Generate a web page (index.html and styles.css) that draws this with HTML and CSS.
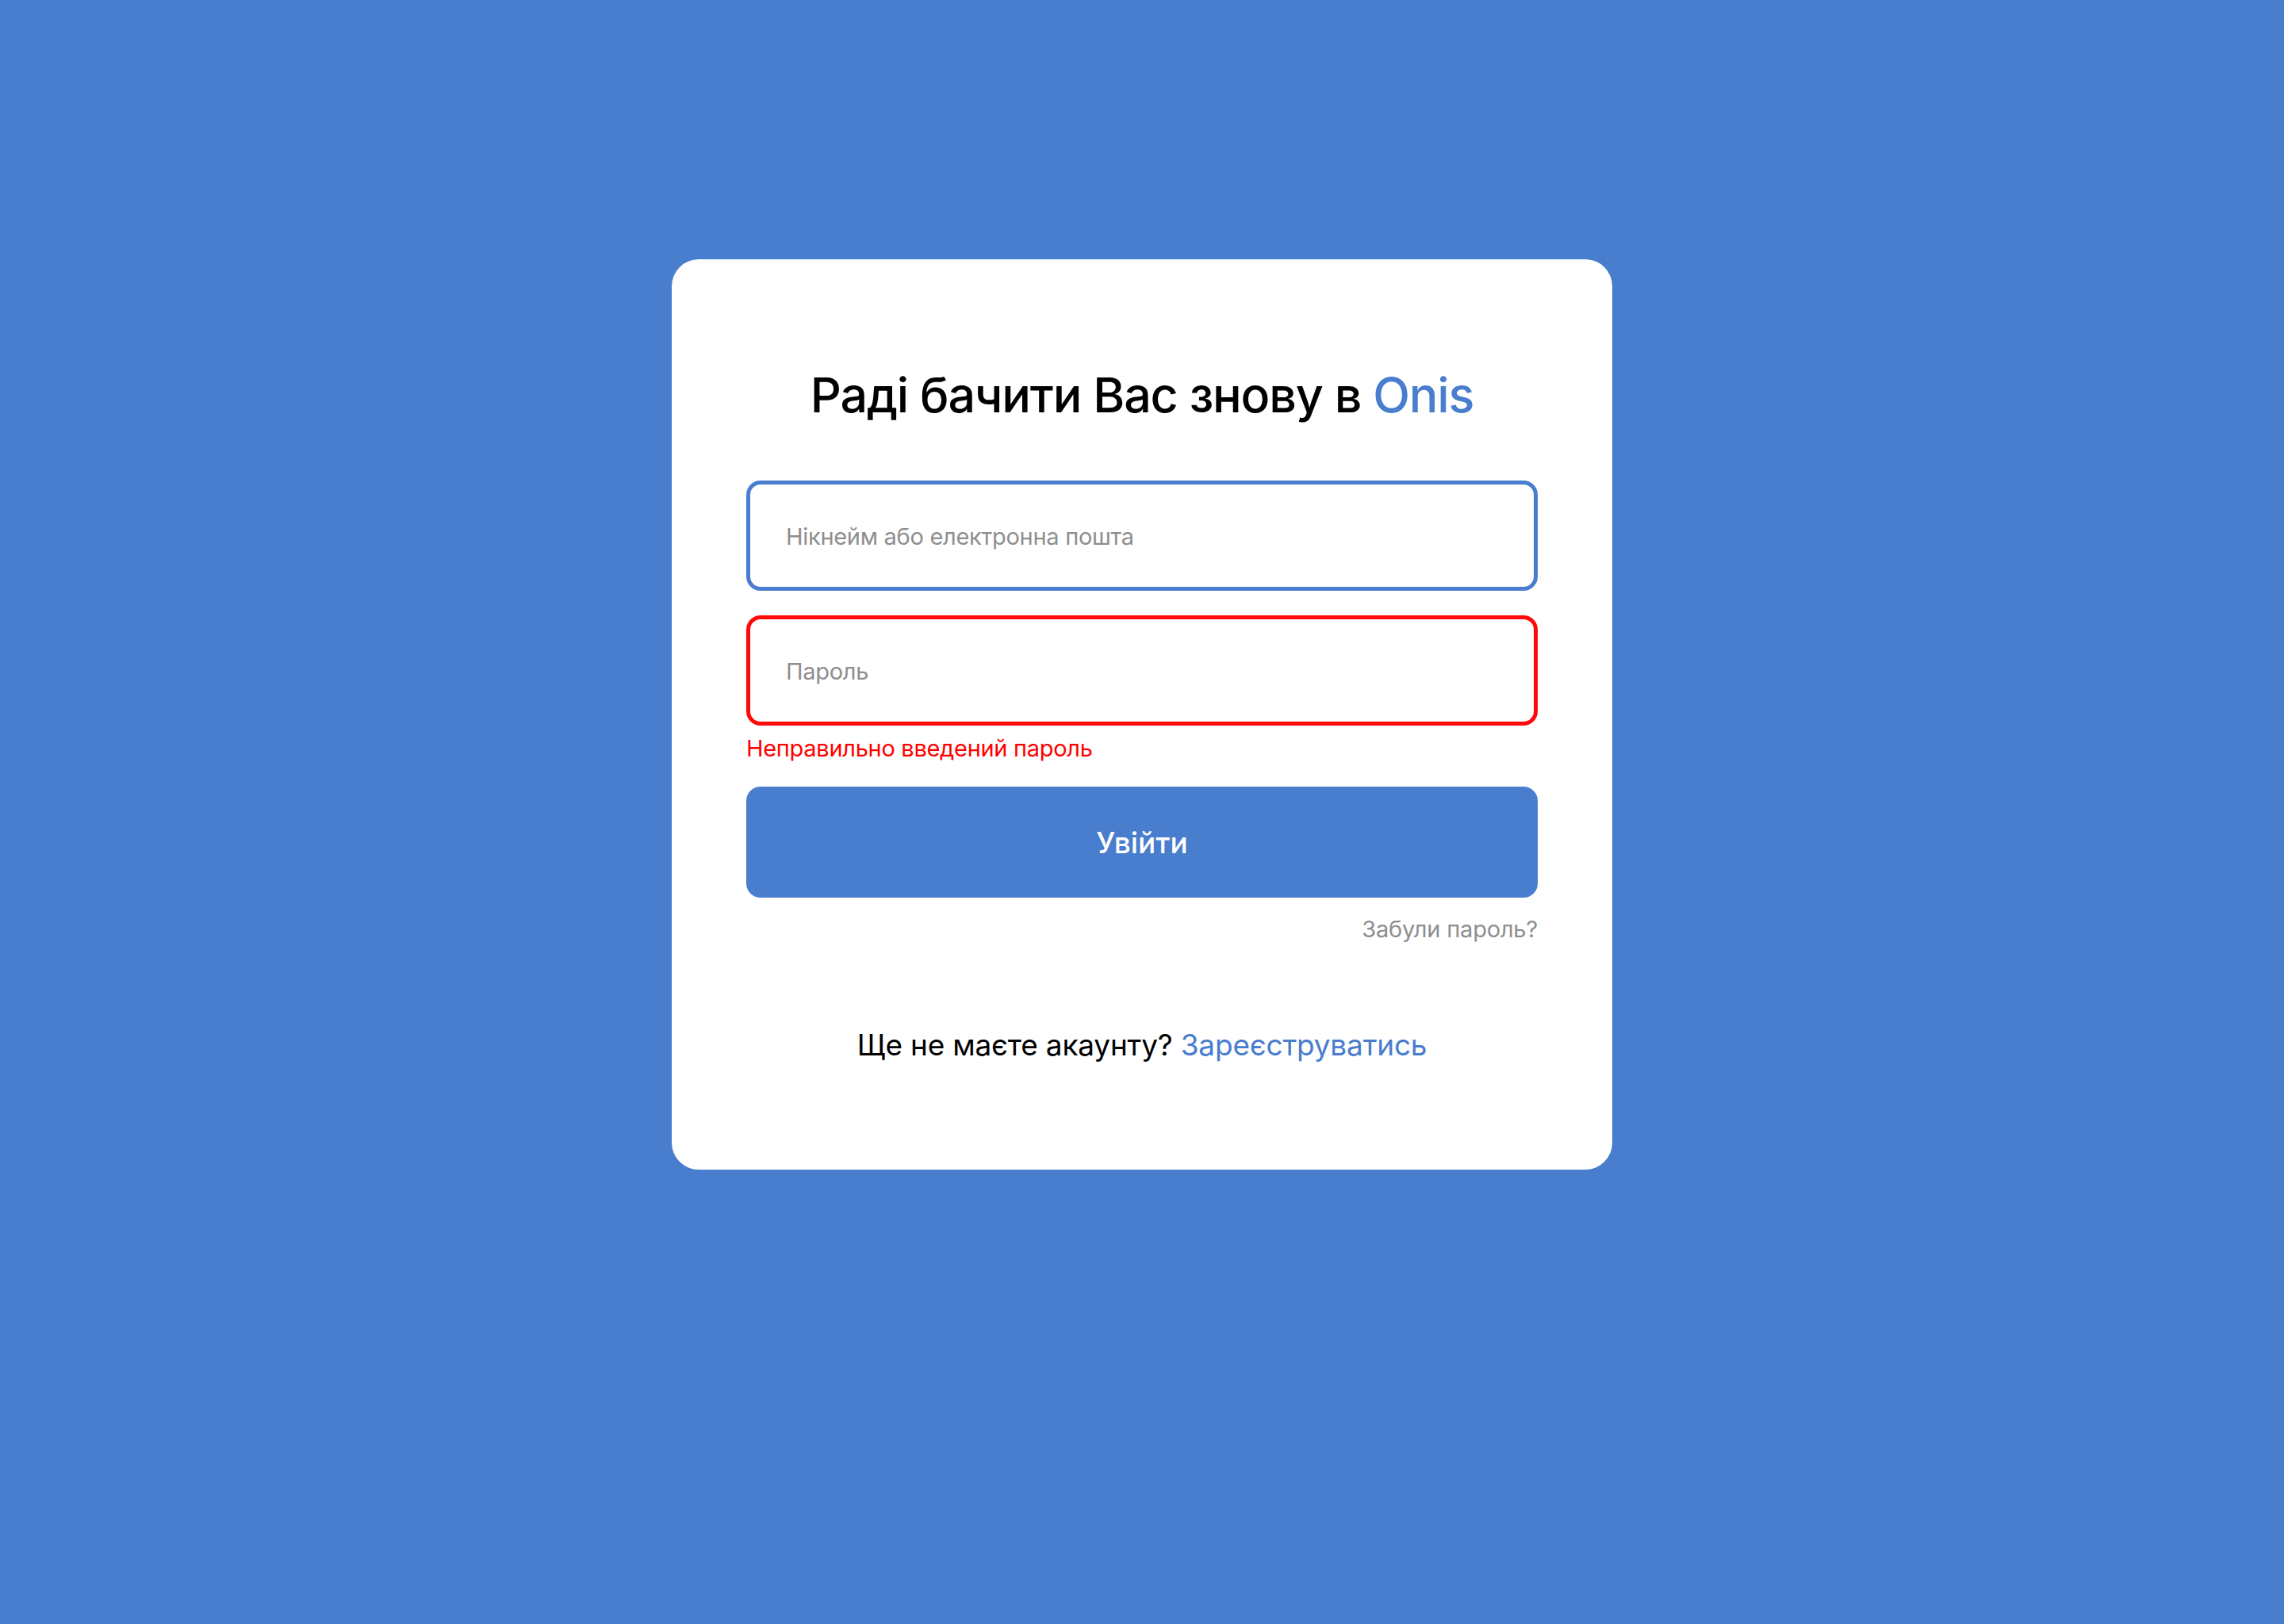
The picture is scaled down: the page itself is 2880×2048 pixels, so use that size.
FILE: index.html
```html
<!DOCTYPE html>
<html lang="uk">
<head>
<meta charset="utf-8">
<title>Onis — вхід</title>
<link rel="stylesheet" href="styles.css">
</head>
<body>
<main class="page">
  <section class="card">
    <h1 class="title">Раді бачити Вас знову в <span class="brand">Onis</span></h1>
    <form class="form">
      <input class="field field-active" type="text" placeholder="Нікнейм або електронна пошта">
      <input class="field field-error" type="password" placeholder="Пароль">
      <p class="error">Неправильно введений пароль</p>
      <button class="submit" type="button">Увійти</button>
      <a class="forgot" href="#">Забули пароль?</a>
    </form>
    <p class="signup">Ще не маєте акаунту? <a class="signup-link" href="#">Зареєструватись</a></p>
  </section>
</main>
</body>
</html>
```

FILE: styles.css
```css
* { box-sizing: border-box; }
html, body {
  margin: 0;
  padding: 0;
}
body {
  background: #497dce;
  min-height: 2048px;
  font-family: Inter, "Noto Sans", sans-serif;
  color: #000;
}
.page {
  display: flex;
  justify-content: center;
  padding-top: 327px;
}
.card {
  width: 1186px;
  background: #fff;
  border-radius: 34px;
  padding: 134px 94px 135px;
  display: flex;
  flex-direction: column;
}
.title {
  margin: 0;
  font-size: 61px;
  line-height: 74px;
  font-weight: 500;
  text-align: center;
  letter-spacing: -1.2px;
}
.brand { color: #497dce; }
.form {
  display: flex;
  flex-direction: column;
  margin-top: 71px;
}
.field {
  height: 139px;
  border-radius: 18px;
  border: 5px solid #497dce;
  padding: 2px 0 0 45px;
  font-family: inherit;
  font-size: 29px;
  letter-spacing: -0.3px;
  color: #000;
  background: #fff;
  outline: none;
}
.field::placeholder { color: #8e8e8e; }
.field-error {
  margin-top: 31px;
  border-color: #ff0a0a;
}
.error {
  margin: 11px 0 0;
  font-size: 29px;
  line-height: 36px;
  letter-spacing: -0.3px;
  color: #ff0000;
}
.submit {
  margin-top: 30px;
  height: 140px;
  border: none;
  border-radius: 18px;
  background: #497dce;
  color: #fff;
  font-family: inherit;
  font-size: 37px;
  font-weight: 500;
}
.forgot {
  margin-top: 22px;
  align-self: flex-end;
  font-size: 29px;
  line-height: 36px;
  letter-spacing: -0.2px;
  color: #8e8e8e;
  text-decoration: none;
}
.signup {
  margin: 106px 0 0;
  text-align: center;
  font-size: 37px;
  line-height: 44px;
  letter-spacing: -0.2px;
}
.signup-link {
  color: #497dce;
  text-decoration: none;
}
```
